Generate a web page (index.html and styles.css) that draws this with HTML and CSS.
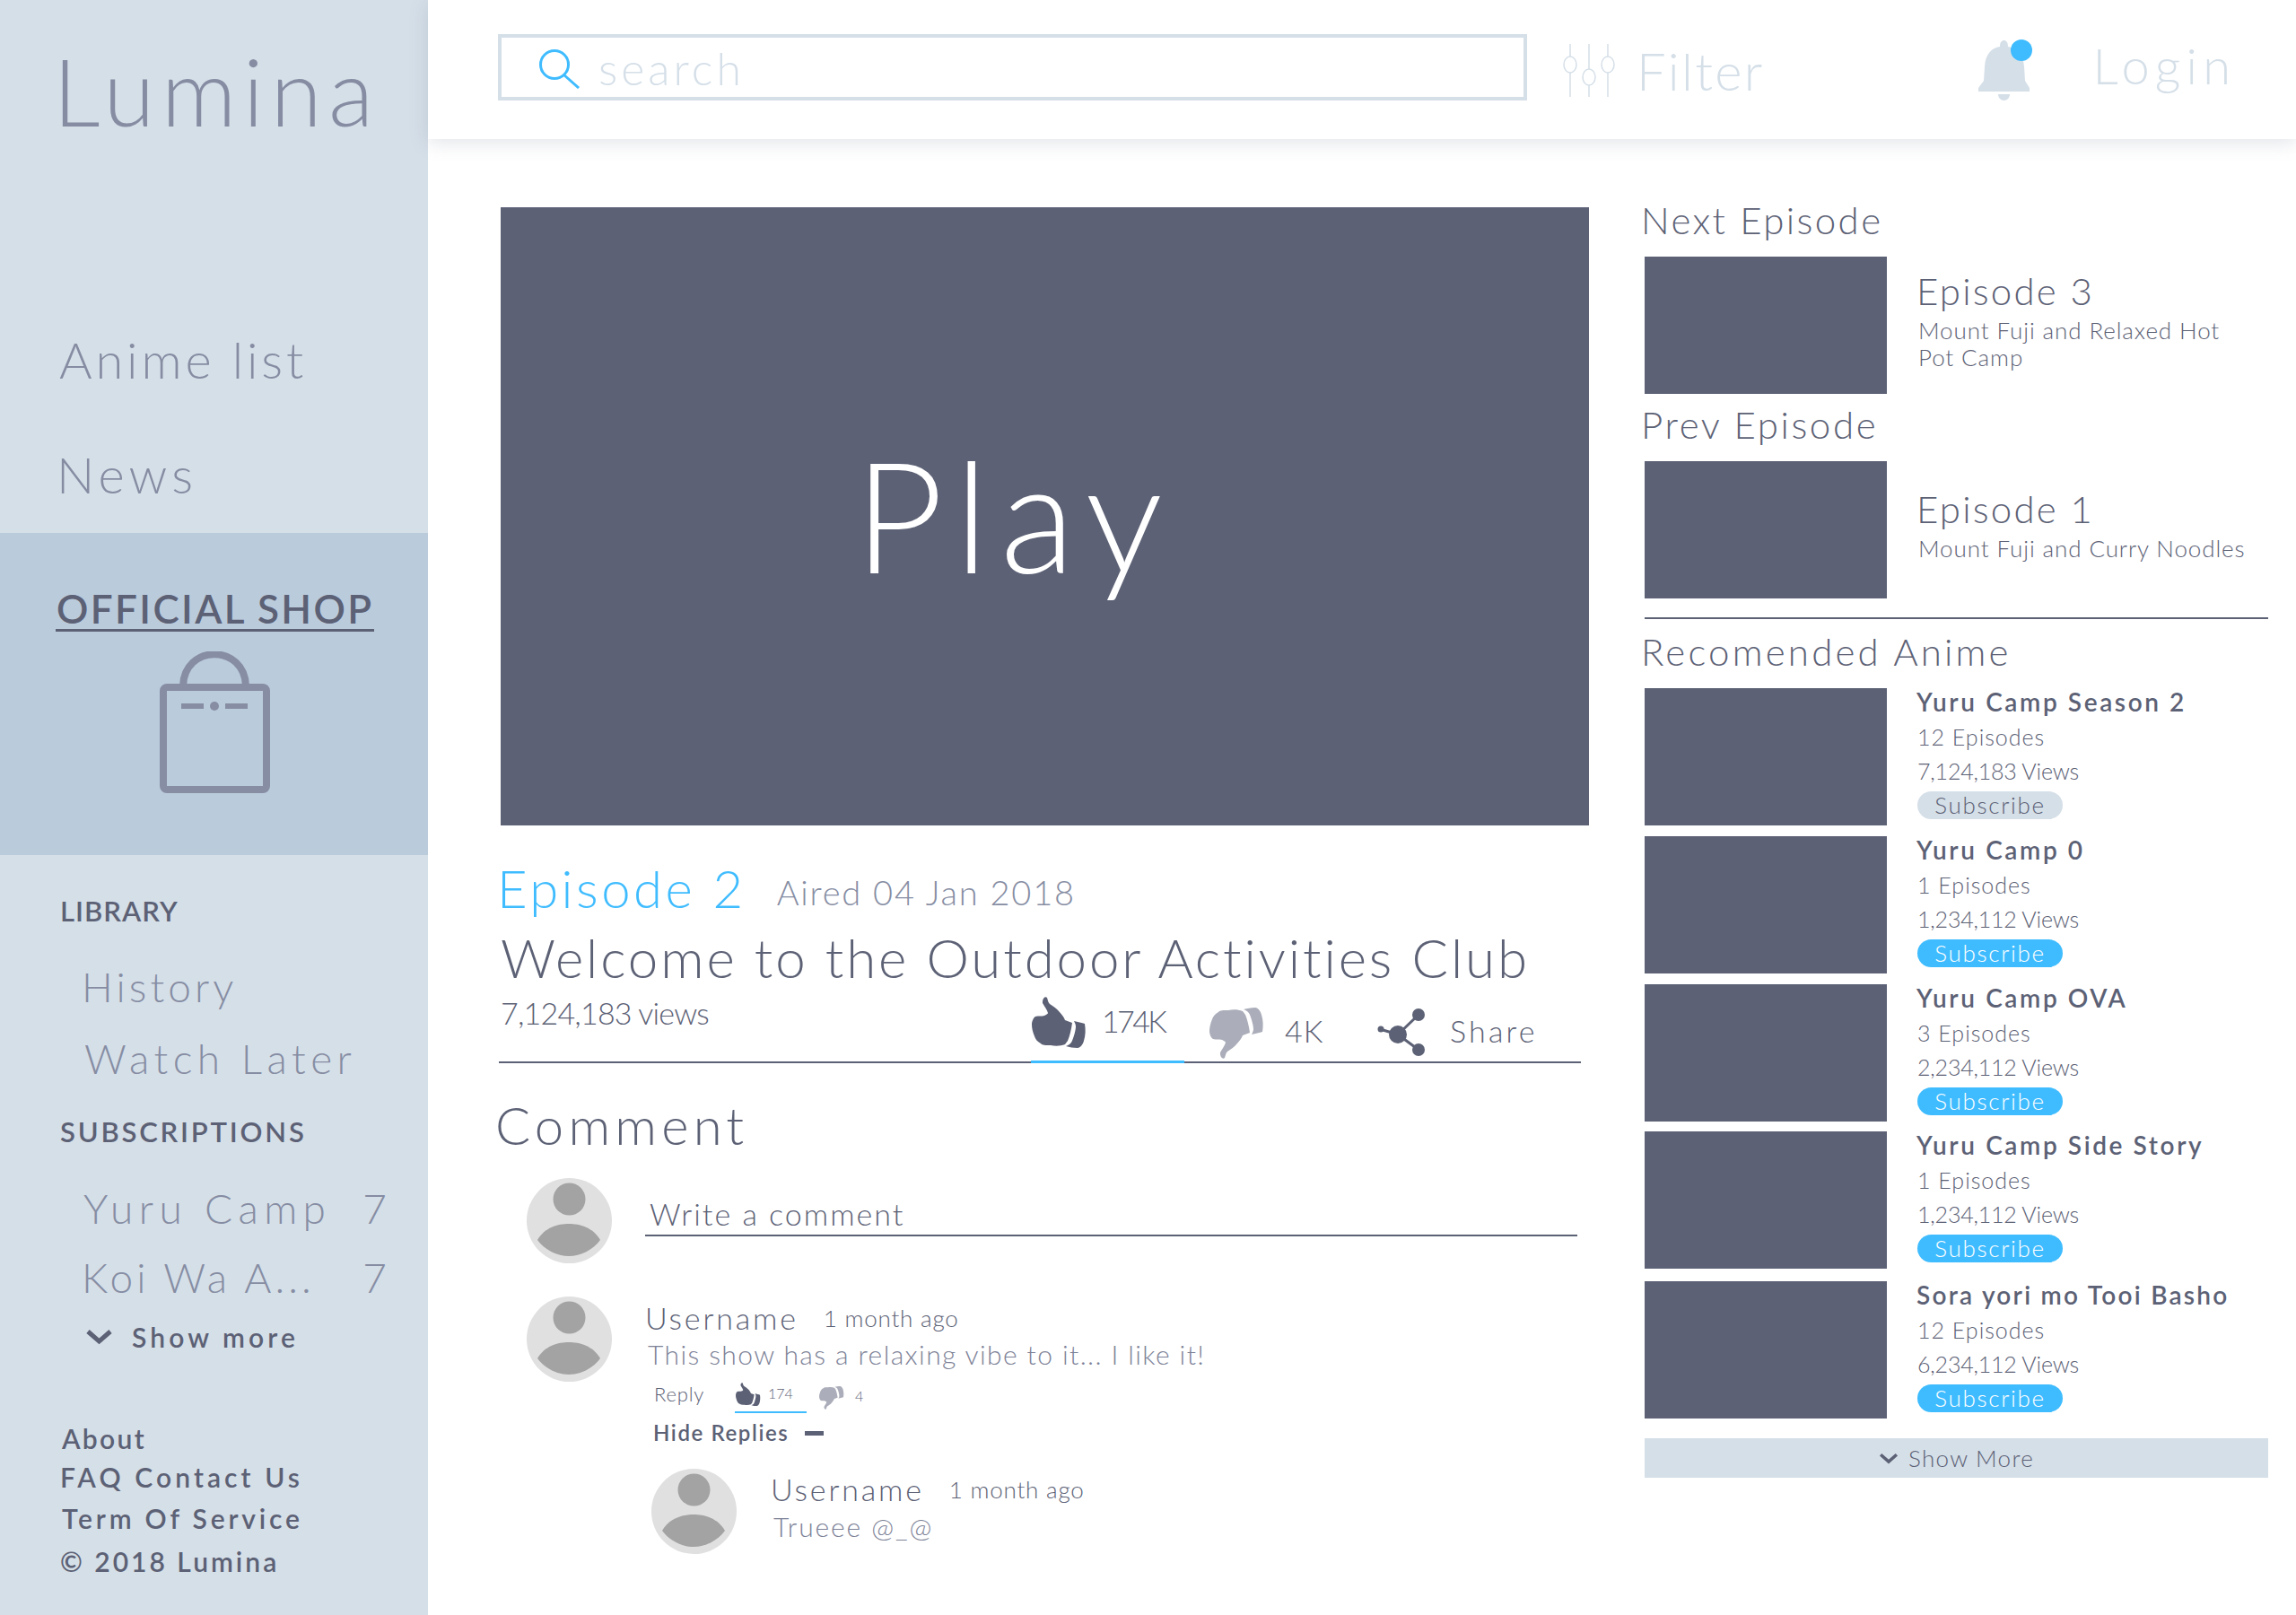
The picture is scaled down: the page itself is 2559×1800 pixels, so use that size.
FILE: index.html
```html
<!DOCTYPE html>
<html>
<head>
    <meta charset="UTF-8" />
    <title>Lumina</title>
    <link rel="stylesheet" href="styles.css">
</head>
<body>
    <svg class="defs" width="0" height="0">
        <symbol id="thumb" viewBox="0 0 61 59">
            <path d="M14 2 C15 0 17 0 18 1 C19 4 19 6 21 8 C25 11 29 13 31 16 C34 19 37 23 38 26 L46 29 C45 37 43 44 41 49 L38 53 C33 55 27 55 22 54 C16 54 13 54 11 52 C7 50 5 47 4 44 C2 39 1 35 1 31 C1 27 3 23 5 22 C8 21 12 22 15 21 C17 20 19 19 19 18 C18 14 15 11 13 7 C13 5 13 3 14 2 Z"/>
            <path d="M48 27 C52 28 57 29 60 30 C61 36 61 43 59 49 C58 53 55 57 52 57 C47 57 43 56 39 55 C42 54 45 52 46 49 C48 44 50 37 50 33 C50 31 49 29 48 27 Z"/>
        </symbol>
        <symbol id="avatar" viewBox="0 0 95 95">
            <circle cx="47.5" cy="47.5" r="47.5" fill="#e0e0e0"/>
            <circle cx="47.5" cy="23.5" r="18" fill="#a3a3a3"/>
            <path d="M12 69 C20 55 35 51 47 51 C59 51 74 55 82 69 C74 80 60 87 47 87 C34 87 20 80 12 69 Z" fill="#a3a3a3"/>
        </symbol>
        <symbol id="chevron" viewBox="0 0 31 18">
            <path d="M3 3 L15.5 14 L28 3" fill="none" stroke="#5c6175" stroke-width="5"/>
        </symbol>
    </svg>

    <div class="page">
        <aside class="sidebar">
            <div class="brand">Lumina</div>
            <nav class="main-nav">
                <a class="nav-item">Anime list</a>
                <a class="nav-item news">News</a>
            </nav>
            <div class="shop">
                <div class="shop-title">OFFICIAL SHOP</div>
                <svg class="bag" viewBox="0 0 123 158" fill="none" stroke="#878da3" stroke-width="8">
                    <path d="M26 40 C26 -9 96 -9 96 40"/>
                    <rect x="4" y="40" width="115" height="114" rx="4"/>
                    <path d="M24 61 H49 M73 61 H98" stroke-width="6"/>
                    <ellipse cx="61" cy="61" rx="5" ry="5" fill="#878da3" stroke="none"/>
                </svg>
            </div>
            <div class="side-lists">
                <h4 class="side-head library">LIBRARY</h4>
                <a class="side-link history">History</a>
                <a class="side-link later">Watch Later</a>
                <h4 class="side-head subs">SUBSCRIPTIONS</h4>
                <div class="sub-row yuru"><span class="side-link">Yuru Camp</span><span class="sub-num">7</span></div>
                <div class="sub-row koi"><span class="side-link">Koi Wa A...</span><span class="sub-num">7</span></div>
                <div class="show-more">
                    <svg class="chevron"><use href="#chevron"/></svg>
                    <span>Show more</span>
                </div>
                <div class="foot-links">
                    <div class="foot about">About</div>
                    <div class="foot faq">FAQ Contact Us</div>
                    <div class="foot term">Term Of Service</div>
                    <div class="foot copy">© 2018 Lumina</div>
                </div>
            </div>
        </aside>

        <div class="main">
            <header class="topbar">
                <div class="search-box">
                    <svg class="search-icon" viewBox="0 0 45 44" fill="none" stroke="#3fbcff">
                        <circle cx="17" cy="17" r="15.5" stroke-width="3"/>
                        <path d="M27 28 L44 43" stroke-width="3"/>
                    </svg>
                    <span class="search-text">search</span>
                </div>
                <svg class="filter-icon" viewBox="0 0 60 59" fill="none" stroke="#d5dfe8" stroke-width="1.5">
                    <path d="M8 0 V14 M8 32 V59 M29 0 V28 M29 46 V59 M50 0 V14 M50 32 V59"/>
                    <ellipse cx="8" cy="23" rx="7" ry="9"/>
                    <ellipse cx="29" cy="37" rx="7" ry="9"/>
                    <ellipse cx="50" cy="23" rx="7" ry="9"/>
                </svg>
                <span class="filter-text">Filter</span>
                <svg class="bell" viewBox="0 0 60 68">
                    <path d="M24 8 C24 3 26 1 28.5 1 C31 1 33 3 33 8 C42 9 50 16 51 30 L52 46 L57 54 L57 58 L0 58 L0 54 L6 46 L7 30 C8 16 15 9 24 8 Z" fill="#d5dfe8"/>
                    <path d="M22 61 H35 C35 65 32 68 28.5 68 C25 68 22 65 22 61 Z" fill="#d5dfe8"/>
                    <circle cx="48" cy="12" r="12" fill="#3fbcff"/>
                </svg>
                <span class="login">Login</span>
            </header>

            <div class="content">
                <section class="left-col">
                    <div class="player"><span class="play-text">Play</span></div>
                    <div class="episode-line">
                        <span class="episode-no">Episode 2</span>
                        <span class="aired">Aired 04 Jan 2018</span>
                    </div>
                    <h1 class="episode-title">Welcome to the Outdoor Activities Club</h1>
                    <div class="stats">
                        <span class="views">7,124,183 views</span>
                        <div class="like">
                            <svg class="thumb-icon"><use href="#thumb"/></svg>
                            <span class="stat-text up">174K</span>
                        </div>
                        <div class="dislike">
                            <svg class="thumb-icon flip"><use href="#thumb"/></svg>
                            <span class="stat-text">4K</span>
                        </div>
                        <div class="share">
                            <svg class="share-icon" viewBox="0 0 55 53" fill="#5c6175" stroke="#5c6175">
                                <path d="M3 23 L23 29 L46 7 M23 29 L46 46" fill="none" stroke-width="3"/>
                                <circle cx="23" cy="29" r="10" stroke="none"/>
                                <circle cx="46" cy="7" r="7" stroke="none"/>
                                <circle cx="46" cy="46" r="7" stroke="none"/>
                                <circle cx="4" cy="23" r="3.5" stroke="none"/>
                            </svg>
                            <span class="stat-text">Share</span>
                        </div>
                    </div>

                    <h2 class="comment-head">Comment</h2>
                    <div class="write-row">
                        <svg class="avatar"><use href="#avatar"/></svg>
                        <div class="write-box"><span>Write a comment</span></div>
                    </div>

                    <div class="comment">
                        <svg class="avatar"><use href="#avatar"/></svg>
                        <div class="comment-body">
                            <div class="comment-meta"><span class="username">Username</span><span class="ago">1 month ago</span></div>
                            <p class="comment-text">This show has a relaxing vibe to it... I like it!</p>
                            <div class="comment-actions">
                                <span class="reply">Reply</span>
                                <div class="mini-like">
                                    <svg class="mini-thumb"><use href="#thumb"/></svg>
                                    <span class="mini-count">174</span>
                                </div>
                                <svg class="mini-thumb flip off"><use href="#thumb"/></svg>
                                <span class="mini-count down">4</span>
                            </div>
                            <div class="hide-replies"><span>Hide Replies</span><i class="dash"></i></div>
                        </div>
                    </div>
                    <div class="comment nested">
                        <svg class="avatar"><use href="#avatar"/></svg>
                        <div class="comment-body">
                            <div class="comment-meta"><span class="username">Username</span><span class="ago">1 month ago</span></div>
                            <p class="comment-text">Trueee @_@</p>
                        </div>
                    </div>
                </section>

                <section class="right-col">
                    <h3 class="col-head">Next Episode</h3>
                    <div class="ep-card">
                        <div class="thumb"></div>
                        <div class="ep-info">
                            <div class="ep-name">Episode 3</div>
                            <div class="ep-desc">Mount Fuji and Relaxed Hot<br>Pot Camp</div>
                        </div>
                    </div>
                    <h3 class="col-head prev">Prev Episode</h3>
                    <div class="ep-card">
                        <div class="thumb"></div>
                        <div class="ep-info lower">
                            <div class="ep-name">Episode 1</div>
                            <div class="ep-desc">Mount Fuji and Curry Noodles</div>
                        </div>
                    </div>
                    <hr class="divider">
                    <h3 class="col-head rec">Recomended Anime</h3>

                    <div class="rec-card">
                        <div class="thumb"></div>
                        <div class="rec-info">
                            <div class="rec-title">Yuru Camp Season 2</div>
                            <div class="rec-line">12 Episodes</div>
                            <div class="rec-line">7,124,183 Views</div>
                            <button class="sub-btn done">Subscribe</button>
                        </div>
                    </div>
                    <div class="rec-card">
                        <div class="thumb"></div>
                        <div class="rec-info">
                            <div class="rec-title">Yuru Camp 0</div>
                            <div class="rec-line">1 Episodes</div>
                            <div class="rec-line">1,234,112 Views</div>
                            <button class="sub-btn">Subscribe</button>
                        </div>
                    </div>
                    <div class="rec-card">
                        <div class="thumb"></div>
                        <div class="rec-info">
                            <div class="rec-title">Yuru Camp OVA</div>
                            <div class="rec-line">3 Episodes</div>
                            <div class="rec-line">2,234,112 Views</div>
                            <button class="sub-btn">Subscribe</button>
                        </div>
                    </div>
                    <div class="rec-card tight">
                        <div class="thumb"></div>
                        <div class="rec-info">
                            <div class="rec-title">Yuru Camp Side Story</div>
                            <div class="rec-line">1 Episodes</div>
                            <div class="rec-line">1,234,112 Views</div>
                            <button class="sub-btn">Subscribe</button>
                        </div>
                    </div>
                    <div class="rec-card last">
                        <div class="thumb"></div>
                        <div class="rec-info">
                            <div class="rec-title">Sora yori mo Tooi Basho</div>
                            <div class="rec-line">12 Episodes</div>
                            <div class="rec-line">6,234,112 Views</div>
                            <button class="sub-btn">Subscribe</button>
                        </div>
                    </div>
                    <div class="more-bar">
                        <svg class="more-chevron"><use href="#chevron"/></svg>
                        <span>Show More</span>
                    </div>
                </section>
            </div>
        </div>
    </div>
</body>
</html>
```
FILE: styles.css
```css
* {
    box-sizing: border-box;
}
body {
    margin: 0;
    font-family: Lato, "Noto Sans", sans-serif;
    font-weight: 300;
    color: #5c6175;
    background: #fff;
}
h1, h2, h3, h4, p {
    margin: 0;
    font-weight: 300;
}
.defs {
    display: block;
}
.page {
    display: flex;
    width: 2559px;
    height: 1800px;
    overflow: hidden;
}

/* sidebar */
.sidebar {
    width: 477px;
    flex-shrink: 0;
    background: #d5dfe8;
    color: #868da3;
}
.brand {
    padding: 51px 0 0 59px;
    font-size: 104px;
    line-height: 100px;
    letter-spacing: 7.4px;
}
.main-nav {
    display: flex;
    flex-direction: column;
    margin-top: 215px;
    padding-left: 66px;
}
.nav-item {
    font-size: 56px;
    line-height: 70px;
    letter-spacing: 3.9px;
}
.news {
    margin: 58px 0 0 -3px;
    letter-spacing: 5px;
}
.shop {
    margin-top: 30px;
    height: 359px;
    background: #bacbdc;
    padding: 61px 0 0 62px;
}
.shop-title {
    display: inline-block;
    padding: 0 0 0 1px;
    border-bottom: 3px solid #5c6175;
    font-size: 44px;
    line-height: 46px;
    font-weight: 600;
    letter-spacing: 2.4px;
    color: #5c6175;
}
.bag {
    display: block;
    width: 123px;
    height: 158px;
    margin: 22px 0 0 116px;
}
.side-lists {
    padding: 44px 0 0 67px;
}
.side-head {
    font-size: 31px;
    line-height: 36px;
    font-weight: 600;
    letter-spacing: 2.8px;
    color: #5c6175;
}
.library {
    letter-spacing: 1px;
}
.subs {
    margin-top: 33px;
}
.side-link {
    display: block;
    font-size: 46px;
    line-height: 60px;
    margin-left: 24px;
    letter-spacing: 4.1px;
}
.history {
    margin-top: 37px;
}
.later {
    margin: 20px 0 0 27px;
    letter-spacing: 5.5px;
}
.sub-row {
    display: flex;
    justify-content: space-between;
    width: 364px;
    font-size: 46px;
    line-height: 60px;
}
.yuru {
    margin-top: 38px;
}
.yuru .side-link {
    margin-left: 26px;
    letter-spacing: 6.4px;
}
.koi {
    margin-top: 17px;
}
.koi .side-link {
    letter-spacing: 4.1px;
}
.show-more {
    display: flex;
    align-items: center;
    margin: 18px 0 0 28px;
    font-size: 30px;
    line-height: 36px;
    font-weight: 600;
    letter-spacing: 4.1px;
    color: #5c6175;
}
.chevron {
    width: 31px;
    height: 18px;
    margin-right: 21px;
}
.foot-links {
    margin-top: 77px;
    font-size: 30px;
    line-height: 36px;
    font-weight: 600;
    color: #5c6175;
}
.about {
    margin-left: 2px;
    letter-spacing: 2.3px;
}
.faq {
    margin-top: 7px;
    letter-spacing: 4.1px;
}
.term {
    margin: 10px 0 0 2px;
    letter-spacing: 3.8px;
}
.copy {
    margin-top: 12px;
    letter-spacing: 3px;
}

/* top bar */
.main {
    flex: 1;
    min-width: 0;
}
.topbar {
    display: flex;
    align-items: center;
    height: 155px;
    padding-left: 78px;
    box-shadow: 0 4px 20px rgba(92, 108, 135, 0.18);
    color: #d5dfe8;
}
.search-box {
    display: flex;
    align-items: center;
    width: 1147px;
    height: 74px;
    margin-bottom: 5px;
    border: 4px solid #d5dfe8;
    padding-left: 42px;
}
.search-icon {
    width: 45px;
    height: 44px;
    margin: 4px 21px 0 0;
}
.search-text {
    margin-top: 1px;
    font-size: 50px;
    line-height: 60px;
    letter-spacing: 4px;
}
.filter-icon {
    width: 60px;
    height: 59px;
    margin-left: 40px;
    margin-top: 2px;
}
.filter-text {
    margin: 2px 0 0 22px;
    font-size: 58px;
    line-height: 60px;
    letter-spacing: 2.3px;
}
.bell {
    width: 60px;
    height: 68px;
    margin-left: 238px;
}
.login {
    margin: 0 0 10px 68px;
    font-size: 56px;
    line-height: 60px;
    letter-spacing: 6.2px;
}

/* content */
.content {
    display: flex;
}
.left-col {
    width: 1216px;
    margin-left: 78px;
    padding-top: 75px;
}
.player {
    display: flex;
    align-items: center;
    justify-content: center;
    width: 1213px;
    height: 689px;
    margin: 1px 0 0 3px;
    background: #5c6175;
    color: #fff;
}
.play-text {
    margin: -6px 68px 0 0;
    font-size: 172px;
    line-height: 200px;
    letter-spacing: 13px;
}
.episode-line {
    display: flex;
    margin-top: 35px;
}
.episode-no {
    margin-left: -1px;
    font-size: 58px;
    line-height: 70px;
    letter-spacing: 3.5px;
    color: #3fbcff;
}
.aired {
    margin: 16px 0 0 34px;
    font-size: 38px;
    line-height: 46px;
    letter-spacing: 1.8px;
    color: #868da3;
}
.episode-title {
    margin: 7px 0 0 3px;
    font-size: 60px;
    line-height: 70px;
    letter-spacing: 2.9px;
}
.stats {
    display: flex;
    width: 1206px;
    height: 83px;
    margin-left: 1px;
    border-bottom: 2px solid #5c6175;
}
.views {
    width: 591px;
    margin: 7px 0 0 2px;
    font-size: 34px;
    line-height: 40px;
    letter-spacing: -0.8px;
}
.like {
    display: flex;
    width: 171px;
    height: 83px;
    padding-top: 9px;
    border-bottom: 3px solid #3fbcff;
}
.thumb-icon {
    width: 61px;
    height: 59px;
    fill: #5c6175;
}
.flip {
    transform: scaleY(-1);
    fill: #abaeba;
}
.stat-text {
    margin: 27px 0 0 24px;
    font-size: 34px;
    line-height: 40px;
    letter-spacing: 1px;
}
.stat-text.up {
    margin: 7px 0 0 18px;
    letter-spacing: -2.6px;
}
.dislike {
    display: flex;
    width: 188px;
    margin-left: 27px;
    padding-top: 19px;
}
.dislike .stat-text {
    margin-top: 8px;
}
.share {
    display: flex;
    padding-top: 22px;
}
.share-icon {
    width: 55px;
    height: 53px;
}
.share .stat-text {
    margin: 5px 0 0 26px;
    letter-spacing: 3.2px;
}
.comment-head {
    margin: 34px 0 0 -3px;
    font-size: 58px;
    line-height: 70px;
    letter-spacing: 5.2px;
}
.write-row {
    display: flex;
    margin: 24px 0 0 32px;
}
.avatar {
    width: 95px;
    height: 95px;
    flex-shrink: 0;
}
.write-box {
    width: 1039px;
    height: 65px;
    margin-left: 37px;
    padding: 20px 0 0 5px;
    border-bottom: 2px solid #5c6175;
    font-size: 34px;
    line-height: 40px;
    letter-spacing: 2px;
}
.comment {
    display: flex;
    margin: 37px 0 0 32px;
}
.comment-body {
    margin-left: 37px;
    padding-top: 4px;
}
.comment-meta {
    display: flex;
}
.username {
    font-size: 34px;
    line-height: 40px;
    letter-spacing: 2.8px;
}
.ago {
    margin-left: 28px;
    font-size: 26px;
    line-height: 40px;
    letter-spacing: 0.8px;
}
.comment-text {
    margin: 2px 0 0 3px;
    font-size: 30px;
    line-height: 36px;
    letter-spacing: 1.4px;
    color: #7d8297;
}
.comment-actions {
    display: flex;
    margin: 14px 0 0 10px;
    height: 34px;
}
.reply {
    width: 90px;
    font-size: 22px;
    line-height: 26px;
    letter-spacing: 0.8px;
}
.mini-like {
    display: flex;
    width: 80px;
    height: 34px;
    border-bottom: 2px solid #3fbcff;
}
.mini-thumb {
    width: 29px;
    height: 27px;
    fill: #5c6175;
}
.mini-thumb.off {
    margin: 3px 0 0 13px;
    fill: #abaeba;
}
.mini-count {
    margin: 2px 0 0 8px;
    font-size: 16px;
    line-height: 20px;
}
.mini-count.down {
    margin: 5px 0 0 12px;
}
.hide-replies {
    display: flex;
    align-items: center;
    margin: 8px 0 0 9px;
    font-size: 24px;
    line-height: 28px;
    font-weight: 600;
    letter-spacing: 1.6px;
}
.dash {
    width: 21px;
    height: 5px;
    margin-left: 18px;
    background: #5c6175;
}
.nested {
    margin: 26px 0 0 171px;
}
.nested .comment-body {
    margin-left: 38px;
    padding-top: 3px;
}
.nested .comment-text {
    margin-top: 3px;
    letter-spacing: 1.9px;
}

/* right column */
.right-col {
    width: 697px;
    margin-left: 60px;
    padding-top: 65px;
}
.col-head {
    margin-left: -2px;
    font-size: 42px;
    line-height: 50px;
    letter-spacing: 2.4px;
}
.prev {
    margin-top: 9px;
    letter-spacing: 2.6px;
}
.rec {
    margin-top: 11px;
    letter-spacing: 3.2px;
}
.ep-card {
    display: flex;
    margin-top: 16px;
}
.rec-card {
    display: flex;
    margin-top: 12px;
}
.thumb {
    width: 270px;
    height: 153px;
    flex-shrink: 0;
    margin-left: 2px;
    background: #5c6175;
}
.ep-info, .rec-info {
    margin-left: 33px;
}
.ep-info {
    padding-top: 13px;
}
.ep-info.lower {
    padding-top: 28px;
}
.ep-name {
    font-size: 42px;
    line-height: 50px;
    letter-spacing: 2.2px;
}
.ep-desc {
    margin: 4px 0 0 2px;
    font-size: 26px;
    line-height: 30px;
    letter-spacing: 0.9px;
}
.divider {
    height: 2px;
    margin: 21px 0 0 2px;
    border: 0;
    background: #5c6175;
}
.rec + .rec-card {
    margin-top: 16px;
}
.tight {
    margin-top: 11px;
}
.last {
    margin-top: 14px;
}
.rec-title {
    font-size: 28px;
    line-height: 30px;
    font-weight: 600;
    letter-spacing: 2.6px;
}
.last .rec-title {
    letter-spacing: 2.25px;
}
.rec-line {
    margin: 9px 0 0 1px;
    font-size: 25px;
    line-height: 30px;
    letter-spacing: 1px;
}
.rec-line + .rec-line {
    margin-top: 8px;
    letter-spacing: -0.2px;
}
.sub-btn {
    display: block;
    width: 162px;
    height: 31px;
    margin: 8px 0 0 1px;
    padding: 0;
    border: 0;
    border-radius: 16px;
    background: #3fbcff;
    color: #fff;
    font-family: inherit;
    font-weight: 300;
    font-size: 26px;
    line-height: 31px;
    letter-spacing: 1.7px;
}
.sub-btn.done {
    background: #d5dfe8;
    color: #5c6175;
}
.more-bar {
    display: flex;
    align-items: center;
    justify-content: center;
    height: 44px;
    margin: 22px 0 0 2px;
    background: #d5dfe8;
    font-size: 26px;
    letter-spacing: 1.3px;
}
.more-chevron {
    width: 22px;
    height: 13px;
    margin-right: 11px;
}
```
